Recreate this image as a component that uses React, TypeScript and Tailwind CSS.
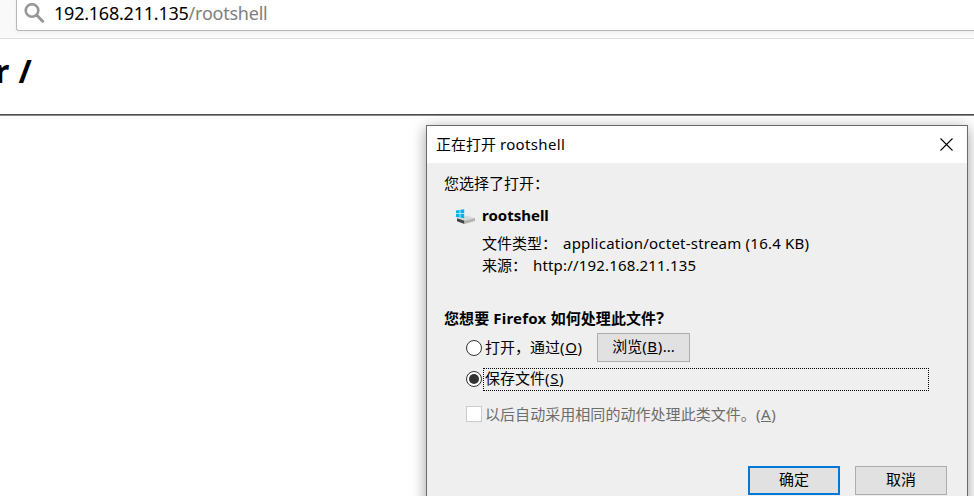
import type { ReactNode } from 'react';

function SearchIcon() {
  return (
    <svg width="21" height="21" viewBox="0 0 21 21" fill="none" stroke="#979797" className="shrink-0">
      <circle cx="8" cy="7.5" r="6.3" strokeWidth="2.6" />
      <path d="M12.5 12 L18.7 18.2" strokeWidth="3" strokeLinecap="round" />
    </svg>
  );
}

function DriveIcon() {
  return (
    <svg width="20" height="16" viewBox="0 0 20 16" className="mt-[3px] shrink-0">
      <path d="M1 9.5 L11 6.8 L19 9 L8.5 12 Z" fill="#d9d9d9" />
      <path d="M1 9.3 L8.5 11.8 V15 L1 12.3 Z" fill="#454545" />
      <path d="M8.5 11.8 L19 9 V12 L8.5 15 Z" fill="#b4b4b4" />
      <path d="M0 1.4 L3.6 0.9 V4.3 H0 Z M4.4 0.8 L8.2 0.2 V4.3 H4.4 Z M0 5.1 H3.6 V8.5 L0 8 Z M4.4 5.1 H8.2 V9.2 L4.4 8.6 Z" fill="#00b4f0" />
    </svg>
  );
}

function Key({ children }: { children: ReactNode }) {
  return (
    <span className="tracking-[0.6px]">
      (<span className="underline decoration-1 underline-offset-[1px]">{children}</span>)
    </span>
  );
}

function Radio({ checked = false }: { checked?: boolean }) {
  return (
    <span className="flex size-4 shrink-0 items-center justify-center rounded-full border border-[#333] bg-white">
      {checked && <span className="size-2.5 rounded-full bg-[#333]" />}
    </span>
  );
}

function Dialog() {
  return (
    <section className="absolute left-[426px] top-[125px] h-[400px] w-[542px] border border-[#6b6b6b] bg-[#efefef] text-[15px] leading-[22px] shadow-[0_3px_14px_rgba(0,0,0,0.38)]">
      <header className="flex h-[37px] items-center justify-between bg-white pl-[9px] pr-[14px]">
        <h2 className="pb-[2px]">正在打开 <span className="tracking-[0.35px]">rootshell</span></h2>
        <svg width="13" height="13" viewBox="0 0 13 13" stroke="#000" strokeWidth="1.1">
          <path d="M0.5 0.5 L12.5 12.5 M12.5 0.5 L0.5 12.5" />
        </svg>
      </header>
      <div className="flex flex-col pl-[17px]">
        <p className="mt-[9px] h-[22px]">您选择了打开：</p>
        <div className="mt-[10px] flex h-[22px] items-center pl-[12px]">
          <DriveIcon />
          <strong className="ml-[6px]">rootshell</strong>
        </div>
        <div className="mt-[6px] flex h-[22px] pl-[38px]">
          <span className="w-[81px]">文件类型：</span>
          <span className="tracking-[0.22px]">application/octet-stream (16.4 KB)</span>
        </div>
        <div className="flex h-[22px] pl-[38px]">
          <span className="w-[51px]">来源：</span>
          <span className="tracking-[0.17px]">http://192.168.211.135</span>
        </div>
        <h3 className="mt-[31px] h-[22px] font-bold tracking-[0.07px]">
          您想要<span className="tracking-[0.22px]"> Firefox </span>如何处理此文件<span className="text-[16px]">?</span>
        </h3>
        <div className="mt-[4px] flex h-[29px] items-center pl-[22px]">
          <Radio />
          <span className="ml-[3px] w-[112px] pb-[2px]">打开，通过<Key>O</Key></span>
          <button className="h-[29px] w-[93px] border border-[#adadad] bg-[#e1e1e1] pb-[3px]">浏览<Key>B</Key>...</button>
        </div>
        <div className="mt-[6px] flex h-[23px] items-center pl-[22px]">
          <span className="-mt-[2px] flex">
            <Radio checked />
          </span>
          <span className="ml-[1px] flex h-[23px] w-[446px] items-center border border-dotted border-black pb-[3px] pl-[1px]">
            <span>保存文件<Key>S</Key></span>
          </span>
        </div>
        <div className="mt-[12px] flex h-[22px] items-center pl-[22px] text-[#6d6d6d]">
          <span className="size-4 border border-[#ccc] bg-white" />
          <span className="ml-[3px] tracking-[0.05px]">以后自动采用相同的动作处理此类文件。<Key>A</Key></span>
        </div>
      </div>
      <footer className="mt-[41px] flex justify-end gap-[15px] pr-[20px]">
        <button className="h-[29px] w-[92px] border-2 border-[#0078d7] bg-[#e1e1e1] pb-[4px]">确定</button>
        <button className="h-[29px] w-[92px] border border-[#adadad] bg-[#e1e1e1] pb-[4px]">取消</button>
      </footer>
    </section>
  );
}

export default function App() {
  return (
    <main className="relative h-[496px] w-[974px] overflow-hidden bg-white font-['Noto_Sans','Noto_Sans_CJK_SC',sans-serif] text-black">
      <div className="h-[39px] border-b border-[#e0e0e1] bg-[#f9f9fa] pl-[16px]">
        <div className="flex h-[31px] w-[980px] items-center rounded-bl-[3px] border-b border-l border-[#b8b8b8] bg-white pb-[3px] pl-[7px] shadow-[0_1px_3px_rgba(0,0,0,0.06)]">
          <SearchIcon />
          <span className="ml-[9px] whitespace-nowrap pb-[2px] text-[18px] leading-6 tracking-[-0.23px]">
            192.168.211.135<span className="text-[#808080]">/rootshell</span>
          </span>
        </div>
      </div>
      <h1 className="-ml-[5px] h-[75px] pt-[12px] text-[32px] font-bold leading-[40px] tracking-[0.5px]">r /</h1>
      <hr className="h-[2px] border-0 border-t border-b border-t-[#4c4c4c] border-b-[#8c8c8c]" />
      <Dialog />
    </main>
  );
}
